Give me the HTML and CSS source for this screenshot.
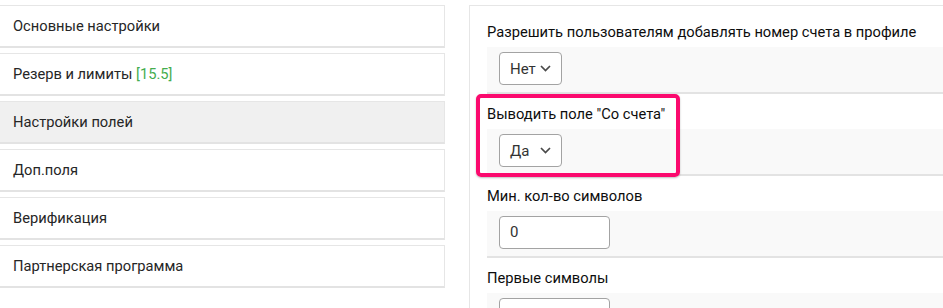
FILE: index.html
```html
<!DOCTYPE html>
<html lang="ru">
<head>
    <meta charset="UTF-8">
    <meta name="viewport" content="width=device-width, initial-scale=1.0">
    <title>Настройки полей</title>
    <link rel="stylesheet" href="styles.css">
</head>
<body>
    <div class="page">
        <ul class="menu">
            <li class="menu-item">Основные настройки</li>
            <li class="menu-item">Резерв и лимиты <span class="badge">[15.5]</span></li>
            <li class="menu-item active">Настройки полей</li>
            <li class="menu-item">Доп.поля</li>
            <li class="menu-item">Верификация</li>
            <li class="menu-item">Партнерская программа</li>
        </ul>

        <div class="panel">
            <div class="field">
                <div class="field-label">Разрешить пользователям добавлять номер счета в профиле</div>
                <div class="field-row">
                    <div class="select">
                        <span>Нет</span>
                        <svg width="11" height="7" viewBox="0 0 11 7"><path d="M1 1l4.5 4.5L10 1" fill="none" stroke="#4a4a4a" stroke-width="1.7"/></svg>
                    </div>
                </div>
            </div>

            <div class="field highlighted">
                <div class="field-label">Выводить поле "Со счета"</div>
                <div class="field-row">
                    <div class="select">
                        <span>Да</span>
                        <svg width="11" height="7" viewBox="0 0 11 7"><path d="M1 1l4.5 4.5L10 1" fill="none" stroke="#4a4a4a" stroke-width="1.7"/></svg>
                    </div>
                </div>
                <div class="marker"></div>
            </div>

            <div class="field">
                <div class="field-label">Мин. кол-во символов</div>
                <div class="field-row">
                    <div class="input">0</div>
                </div>
            </div>

            <div class="field">
                <div class="field-label">Первые символы</div>
                <div class="field-row">
                    <div class="input"></div>
                </div>
            </div>
        </div>
    </div>
</body>
</html>
```

FILE: styles.css
```css
body {
    margin: 0;
    background: #fff;
    font-family: Roboto, "Noto Sans", Arial, sans-serif;
    font-size: 14.7px;
    color: #222;
}

.page {
    display: flex;
    align-items: flex-start;
    gap: 24px;
    padding-top: 5px;
    height: 303px;
    overflow: hidden;
}

.menu {
    list-style: none;
    margin: 0 0 0 -2px;
    padding: 0;
    width: 447px;
    flex-shrink: 0;
    display: flex;
    flex-direction: column;
    gap: 5px;
}

.menu-item {
    height: 40px;
    line-height: 40px;
    padding: 0 14px;
    border: 1px solid #e6e6e6;
    border-bottom: 2px solid #e3e3e3;
    color: #262626;
    background: #fff;
}

.menu-item.active {
    background: #f0f0f0;
}

.badge {
    color: #45ad4f;
}

.panel {
    flex: 1;
    margin-right: -40px;
    border: 1px solid #e6e6e6;
    border-bottom: none;
    padding: 6px 0 0 17px;
}

.field {
    position: relative;
}

.field-label {
    padding: 10px 0 5px;
    line-height: 20px;
    color: #0d0d0d;
}

.field-row {
    background: #f9f9f9;
    border-bottom: 2px solid #e3e3e3;
    padding: 5px 12px 7px;
}

.select {
    width: 63px;
    height: 33px;
    box-sizing: border-box;
    border: 1px solid #a3a3a3;
    border-radius: 4px;
    background: #fff;
    display: flex;
    align-items: center;
    justify-content: space-between;
    padding: 0 10px;
    font-size: 15px;
    color: #333;
}

.input {
    width: 111px;
    height: 33px;
    box-sizing: border-box;
    border: 1px solid #a3a3a3;
    border-radius: 4px;
    background: #fff;
    line-height: 31px;
    padding: 0 10px;
    font-size: 15px;
    color: #333;
}

.marker {
    position: absolute;
    left: -11px;
    top: 0;
    width: 204px;
    height: 83px;
    box-sizing: border-box;
    border: 4px solid #fb0a6e;
    border-radius: 5px;
    box-shadow: 0 1px 2px rgba(0, 0, 0, 0.25);
}
```
